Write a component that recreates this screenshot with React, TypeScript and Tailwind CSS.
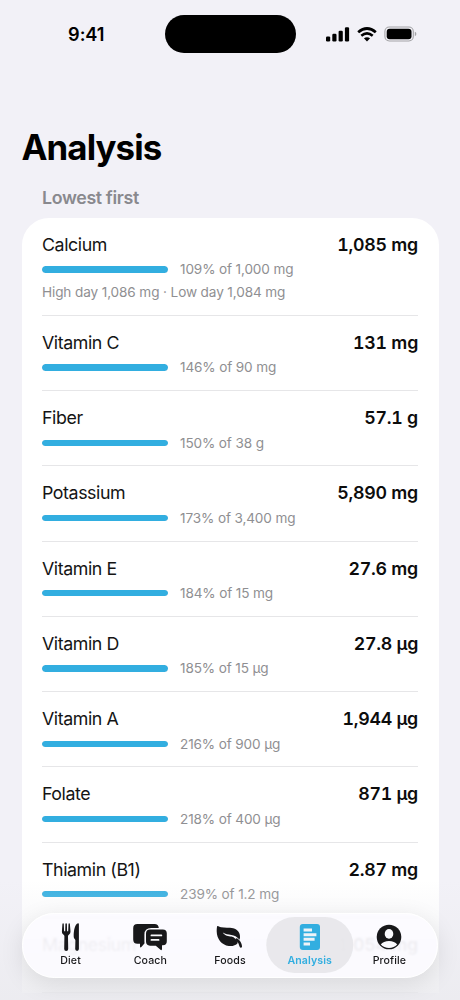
import React from 'react'

import { cva } from 'class-variance-authority';
import clsx from 'clsx';

interface Nutrient {
    name: string;
    value: string;
    target?: string;
    percent?: number;
    range?: string;
}

const NUTRIENTS: Nutrient[] = [
    { name: "Calcium", value: "1,085 mg", percent: 109, target: "1,000 mg", range: "High day 1,086 mg · Low day 1,084 mg" },
    { name: "Vitamin C", value: "131 mg", percent: 146, target: "90 mg" },
    { name: "Fiber", value: "57.1 g", percent: 150, target: "38 g" },
    { name: "Potassium", value: "5,890 mg", percent: 173, target: "3,400 mg" },
    { name: "Vitamin E", value: "27.6 mg", percent: 184, target: "15 mg" },
    { name: "Vitamin D", value: "27.8 µg", percent: 185, target: "15 µg" },
    { name: "Vitamin A", value: "1,944 µg", percent: 216, target: "900 µg" },
    { name: "Folate", value: "871 µg", percent: 218, target: "400 µg" },
    { name: "Thiamin (B1)", value: "2.87 mg", percent: 239, target: "1.2 mg" },
    { name: "Magnesium", value: "1,054 mg" },
];

const DietIcon = () => (
    <svg viewBox="0 0 20 28" className="h-[28px] w-[20px]" fill="currentColor">
        <path d="M1.4 1.2 Q1.5 .3 2.1 .3 Q2.7 .3 2.8 1.2 L3.1 8.2 H4.2 L4.4 1 Q4.5 .2 5.1 .2 Q5.8 .2 5.9 1 L6.1 8.2 H7.2 L7.5 1.2 Q7.6 .3 8.2 .3 Q8.8 .3 8.9 1.2 L9.5 8.6 Q9.6 10.6 8.1 11.6 Q7 12.2 7 13.3 L7.2 25.9 Q7.2 27.9 5.2 27.9 Q3.2 27.9 3.2 25.9 L3.4 13.3 Q3.4 12.2 2.3 11.6 Q.7 10.6 .9 8.6 Z" />
        <path d="M17.1 .3 Q17.9 .2 17.9 1.2 V26.1 Q17.9 27.9 16.1 27.9 Q14.2 27.9 14.2 26.1 L14.4 17.4 Q14.4 16.6 13.7 16 Q12.7 15.2 12.7 13.4 C12.7 7.4 13.8 1.2 17.1 .3 Z" />
    </svg>
)

const CoachIcon = () => (
    <svg viewBox="0 0 36 28" className="h-[28px] w-[36px]" fill="currentColor">
        <path d="M5.4 1 H22.6 Q26.4 1 26.8 5.1 H19.2 Q12.4 5.1 12.4 11.7 V18.3 Q12.4 19.1 12.6 20.2 L9.6 23.8 Q8.1 25.4 8 23.4 V20.8 H5.4 Q1.2 20.8 1.2 16.6 V5.2 Q1.2 1 5.4 1 Z" />
        <path d="M18 6.5 H30.8 Q34.8 6.5 34.8 10.5 V18.2 Q34.8 22.3 30.8 22.3 H30 V25.8 Q30 28 28.2 26.6 L23.8 22.7 H18 Q14 22.7 14 18.6 V10.5 Q14 6.5 18 6.5 Z" />
        <path d="M19.4 12.4 H29.4 M19.4 16.9 H26.6" fill="none" stroke="#fafafd" strokeWidth="1.7" strokeLinecap="round" />
    </svg>
)

const FoodsIcon = () => (
    <svg viewBox="0 0 28 24" className="h-[24px] w-[28px]" fill="currentColor">
        <path d="M1.1 1.4 C1.7 .2 2.8 1.7 5.2 2.3 C8.8 3.1 13 2.3 17.2 3.3 C21.6 4.4 24.2 7.8 24 12.2 C23.9 13.6 23.6 14.2 23.6 14.8 C20.8 11.4 18.4 10.4 15.4 9.9 C12 9.3 9.4 9.4 6.8 7.5 C9 11 12.4 11 15.4 11.6 C18.6 12.2 20.4 14.6 21.8 18 C19.6 20.6 16.4 21.4 12.8 21 C5.6 20.3 .8 13.8 .7 6.6 C.7 4.4 .8 2.4 1.1 1.4 Z" />
        <path d="M20.6 14.6 Q24.2 17.2 24.8 21.4" fill="none" stroke="currentColor" strokeWidth="2.5" strokeLinecap="round" />
    </svg>
)

const AnalysisIcon = () => (
    <svg viewBox="0 0 22 26" className="h-[26px] w-[22px]" fill="currentColor">
        <rect x="0.8" y="0" width="20.2" height="26" rx="3" />
        <path d="M4.6 4.6 H13 V7.6 H4.6 Z M4.6 9.2 H17.4 V12.2 H4.6 Z M4.6 13.8 H15.6 V16.8 H4.6 Z M4.6 18.4 H11 V21.4 H4.6 Z" fill="#eef3f7" />
    </svg>
)

const ProfileIcon = () => (
    <svg viewBox="0 0 26 26" className="size-[26px]">
        <circle cx="13" cy="13" r="12.3" fill="currentColor" />
        <ellipse cx="13" cy="9.9" rx="4.3" ry="4.8" fill="#fafafd" />
        <path d="M4.8 20.6 C6.4 18 9.4 16.9 13 16.9 C16.6 16.9 19.6 18 21.2 20.6 C19.2 22.8 16.3 24 13 24 C9.7 24 6.8 22.8 4.8 20.6 Z" fill="#fafafd" />
    </svg>
)

const TABS = [
    { label: "Diet", icon: DietIcon },
    { label: "Coach", icon: CoachIcon },
    { label: "Foods", icon: FoodsIcon },
    { label: "Analysis", icon: AnalysisIcon },
    { label: "Profile", icon: ProfileIcon },
];

const tab = cva("relative flex h-full w-[79.7px] flex-col items-center", {
    variants: {
        active: {
            true: "font-semibold text-[#32aee0]",
            false: "font-medium text-[#18181a]",
        },
    },
});

const StatusBar = () => (
    <header className="flex h-[68px] items-center justify-between">
        <div className="flex w-[164.5px] justify-center pt-px pl-[8px]">
            <span className="text-[18.2px] font-semibold tracking-[-0.1px] text-black">9:41</span>
        </div>
        <div className="h-[38.5px] w-[131px] rounded-full bg-black" />
        <div className="flex w-[164.5px] items-center gap-[7px] pl-[30.5px]">
            <svg viewBox="0 0 24 15" className="h-[15px] w-[24px]">
                <rect x="0" y="9.4" width="4.2" height="5" rx="1.2" />
                <rect x="6.3" y="6.8" width="4.2" height="7.6" rx="1.2" />
                <rect x="12.6" y="3.7" width="4.2" height="10.7" rx="1.2" />
                <rect x="18.9" y="0.3" width="4.2" height="14.1" rx="1.2" />
            </svg>
            <svg viewBox="0 0 20 15" className="h-[15px] w-[20px]" fill="none" stroke="black">
                <path d="M1.2 5.2 Q10 -2.2 18.8 5.2" strokeWidth="2.8" />
                <path d="M4.3 8.8 Q10 4 15.7 8.8" strokeWidth="2.6" />
                <path d="M6.9 11.3 Q10 9 13.1 11.3 L10 14.4 Z" fill="black" stroke="none" />
            </svg>
            <svg viewBox="0 0 33 16" className="h-[16px] w-[33px]">
                <rect x="0.9" y="1" width="28.4" height="14" rx="4.4" fill="none" stroke="#a4a4a7" strokeWidth="1.1" />
                <rect x="2.7" y="2.8" width="24.8" height="10.4" rx="3" />
                <path d="M30.8 5.8 Q32.4 6.4 32.4 8 Q32.4 9.6 30.8 10.2 Z" fill="#a4a4a7" />
            </svg>
        </div>
    </header>
)

const NutrientRow = ({ nutrient }: { nutrient: Nutrient }) => {

    const { name, value, percent, target, range } = nutrient;

    return (
        <li className={clsx("flex flex-col border-b border-[#e6e6e8] pt-[15.4px]", range ? "h-[97.9px]" : "h-[75.25px]")}>
            <div className="flex h-6 items-center justify-between">
                <h3 className="text-[17.8px] tracking-[-0.42px] text-[#141414]">
                    {name}
                </h3>
                <p className="text-[17.8px] font-semibold tracking-[-0.25px] text-[#0c0c0c] tabular-nums">
                    {value}
                </p>
            </div>
            {percent && (
                <div className="mt-[2.2px] flex h-5 items-center gap-[12.5px]">
                    <div className="h-[6.3px] w-[125.5px] overflow-hidden rounded-full bg-[#e5e5ea]">
                        <div className="h-full rounded-full bg-[#32aee0]" style={{ width: `${Math.min(percent, 100)}%` }} />
                    </div>
                    <p className="text-[13.6px] tracking-[-0.14px] text-[#8f8f92]">
                        {percent}% of {target}
                    </p>
                </div>
            )}
            {range && (
                <p className="mt-[2.4px] text-[13.6px] leading-5 tracking-[-0.12px] text-[#8f8f92]">
                    {range}
                </p>
            )}
        </li>
    )
}

const TabBar = () => (
    <nav className="absolute top-[912.5px] left-[22px] flex h-[65px] w-[416px] justify-center rounded-full border-[1.5px] border-white bg-[#fcfbff]/90 shadow-[0_6px_24px_rgba(0,0,0,0.10)] backdrop-blur-[1.2px]">
        {TABS.map(({ label, icon: Icon }) => {
            const active = label === "Analysis";
            return (
                <button key={label} className={tab({ active })}>
                    {active && <span className="absolute top-[3.5px] left-1/2 h-[55.5px] w-[87.5px] -translate-x-1/2 rounded-full bg-[#e7e7ea]/90" />}
                    <span className="relative mt-[8.5px] flex h-[30px] items-center justify-center">
                        <Icon />
                    </span>
                    <span className="relative mt-px text-[10.6px] leading-[16px] tracking-[0.1px]">
                        {label}
                    </span>
                </button>
            )
        })}
    </nav>
)

const App: React.FC = () => {
    return (
        <div className="relative h-[1000px] w-[460px] overflow-hidden bg-[#f2f1f7] font-['Inter','Liberation_Sans',sans-serif]">
            <StatusBar />
            <main className="px-[21.5px] pt-[56px]">
                <h1 className="text-[34.8px] leading-[46px] font-bold tracking-[-0.9px] text-black">
                    Analysis
                </h1>
                <h2 className="mt-[16px] pl-[20.5px] text-[17.8px] leading-[24px] font-semibold tracking-[-0.35px] text-[#89898e]">
                    Lowest first
                </h2>
                <ul className="mt-[8px] rounded-t-[27px] bg-white px-[20.5px]">
                    {NUTRIENTS.map((nutrient) => (
                        <NutrientRow key={nutrient.name} nutrient={nutrient} />
                    ))}
                </ul>
            </main>
            <div className="pointer-events-none absolute inset-x-0 bottom-0 h-[120px] bg-linear-to-b from-[#ebebef]/0 to-[#ebebef]/85" />
            <TabBar />
        </div>
    )
}

export default App;
